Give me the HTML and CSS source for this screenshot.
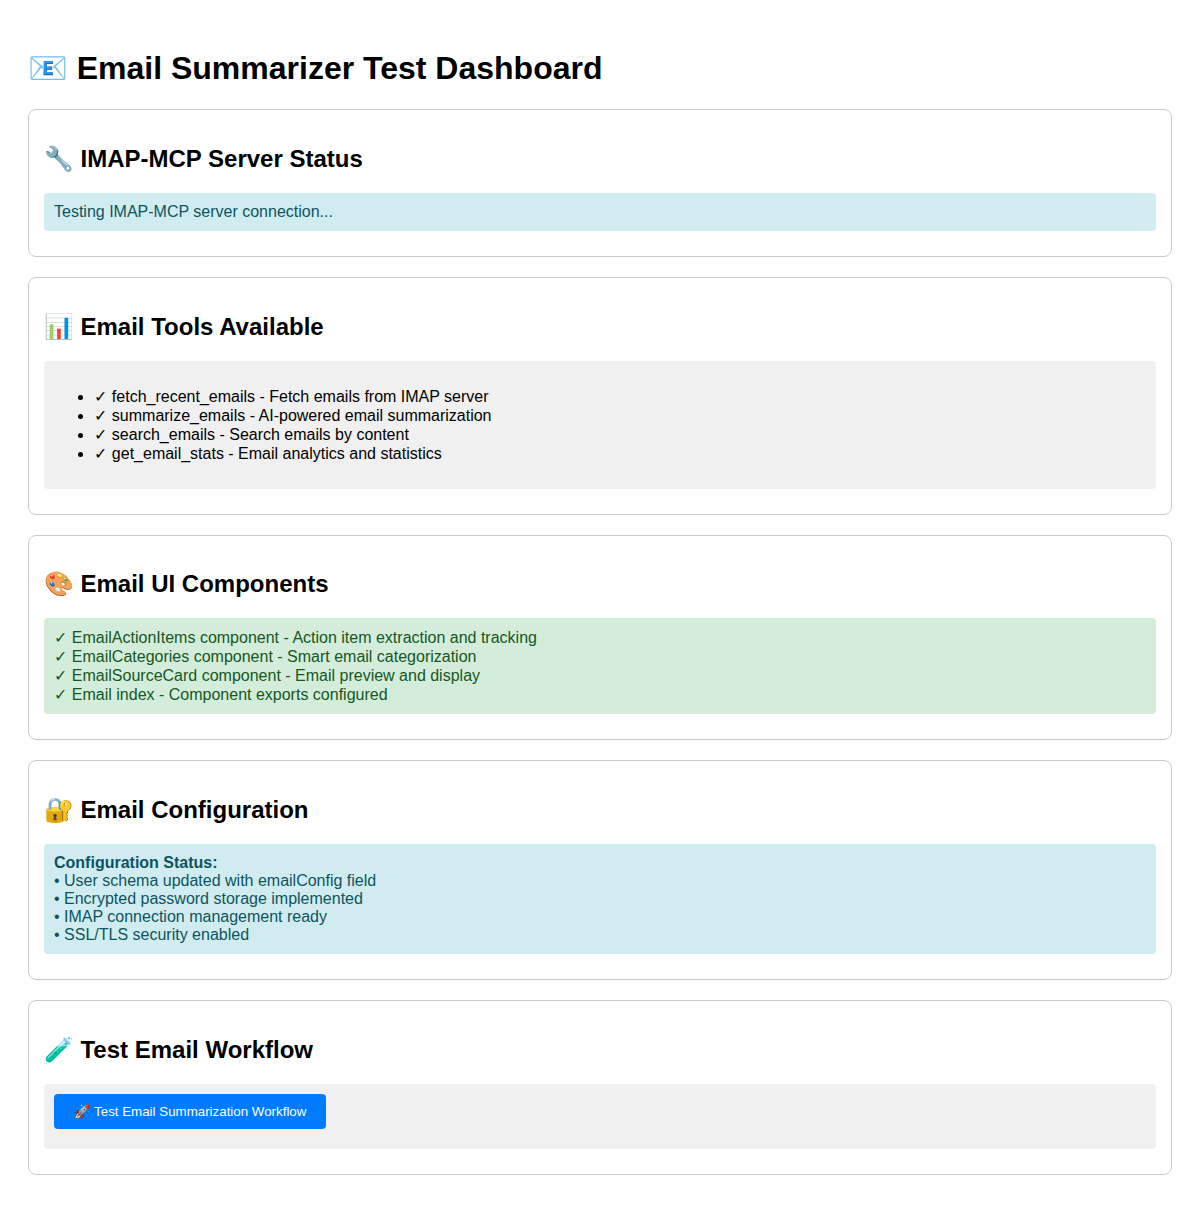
FILE: index.html
```html
<!DOCTYPE html>
<html lang="en">
<head>
<meta charset="UTF-8">
<title>Email Summarizer Test Dashboard</title>
<link rel="stylesheet" href="styles.css">
</head>
<body>
<div class="container">
  <h1><span class="emoji">📧</span> Email Summarizer Test Dashboard</h1>

  <div class="section">
    <h2><span class="emoji">🔧</span> IMAP-MCP Server Status</h2>
    <div class="status info">Testing IMAP-MCP server connection...</div>
  </div>

  <div class="section">
    <h2><span class="emoji">📊</span> Email Tools Available</h2>
    <div class="status">
      <ul>
        <li><span class="tick">✓</span> fetch_recent_emails - Fetch emails from IMAP server</li>
        <li><span class="tick">✓</span> summarize_emails - AI-powered email summarization</li>
        <li><span class="tick">✓</span> search_emails - Search emails by content</li>
        <li><span class="tick">✓</span> get_email_stats - Email analytics and statistics</li>
      </ul>
    </div>
  </div>

  <div class="section">
    <h2><span class="emoji">🎨</span> Email UI Components</h2>
    <div class="status success">
      <span class="tick">✓</span> EmailActionItems component - Action item extraction and tracking<br>
      <span class="tick">✓</span> EmailCategories component - Smart email categorization<br>
      <span class="tick">✓</span> EmailSourceCard component - Email preview and display<br>
      <span class="tick">✓</span> Email index - Component exports configured
    </div>
  </div>

  <div class="section">
    <h2><span class="emoji">🔐</span> Email Configuration</h2>
    <div class="status info">
      <strong>Configuration Status:</strong><br>
      • User schema updated with emailConfig field<br>
      • Encrypted password storage implemented<br>
      • IMAP connection management ready<br>
      • SSL/TLS security enabled
    </div>
  </div>

  <div class="section">
    <h2><span class="emoji">🧪</span> Test Email Workflow</h2>
    <div class="status">
      <button class="run" type="button"><span class="emoji">🚀</span> Test Email Summarization Workflow</button>
      <div class="results"></div>
    </div>
  </div>
</div>
</body>
</html>
```
FILE: styles.css
```css
body {
  margin: 28px;
  background: #fff;
  color: #000;
  font-family: "Liberation Sans", Arial, sans-serif;
}

.container {
  display: flow-root;
}

.section {
  margin: 20px 0;
  padding: 15px;
  border: 1px solid #ccc;
  border-radius: 8px;
}

.emoji {
  margin-right: -0.2px;
}

.tick {
  margin-right: 0.4px;
}

.status {
  margin: 10px 0;
  padding: 10px;
  border-radius: 4px;
  background: #f0f0f0;
}

.info {
  background: #d1ecf1;
  color: #0c5460;
}

.success {
  background: #d4edda;
  color: #155724;
}

.run {
  padding: 10px 20px;
  border: none;
  border-radius: 4px;
  background: #007bff;
  color: #fff;
  font-family: "Liberation Sans", Arial, sans-serif;
}

.run .emoji {
  margin-right: -0.4px;
}

.results {
  margin-top: 10px;
}
```
